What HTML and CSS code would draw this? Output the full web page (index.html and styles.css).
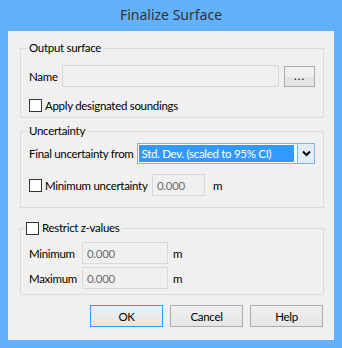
FILE: index.html
```html
<!DOCTYPE html>
<html lang="en">
<head>
    <meta charset="UTF-8">
    <title>Finalize Surface</title>
    <link rel="stylesheet" href="styles.css">
</head>
<body>
    <div class="window">
        <div class="titlebar">Finalize Surface</div>
        <div class="client">
            <div class="group group-output">
                <div class="group-title">Output surface</div>
                <div class="row name-row">
                    <span class="lbl lbl-name">Name</span>
                    <input class="field field-name" type="text" disabled>
                    <button class="btn btn-browse" type="button">...</button>
                </div>
                <label class="row check-row"><input type="checkbox" class="check">Apply designated soundings</label>
            </div>

            <div class="group group-uncert">
                <div class="group-title">Uncertainty</div>
                <div class="row combo-row">
                    <span class="lbl lbl-from">Final uncertainty from</span>
                    <div class="combo">
                        <span class="combo-text">Std. Dev. (scaled to 95% CI)</span>
                        <span class="combo-btn">
                            <svg width="9" height="7" viewBox="0 0 9 7"><path d="M1 1.5 L4.5 5 L8 1.5" fill="none" stroke="#000" stroke-width="2"/></svg>
                        </span>
                    </div>
                </div>
                <div class="row min-row">
                    <label class="check-label"><input type="checkbox" class="check">Minimum uncertainty</label>
                    <input class="field field-small" type="text" value="0.000" disabled>
                    <span class="unit unit-wide">m</span>
                </div>
            </div>

            <div class="group group-z">
                <label class="group-title"><input type="checkbox" class="check">Restrict z-values</label>
                <div class="row z-row z-min">
                    <span class="lbl lbl-z">Minimum</span>
                    <input class="field field-z" type="text" value="0.000" disabled>
                    <span class="unit">m</span>
                </div>
                <div class="row z-row z-max">
                    <span class="lbl lbl-z">Maximum</span>
                    <input class="field field-z" type="text" value="0.000" disabled>
                    <span class="unit">m</span>
                </div>
            </div>

            <div class="buttons">
                <button class="btn btn-dialog btn-default" type="button">OK</button>
                <button class="btn btn-dialog" type="button">Cancel</button>
                <button class="btn btn-dialog" type="button">Help</button>
            </div>
        </div>
    </div>
</body>
</html>
```

FILE: styles.css
```css
body {
    margin: 0;
    font-family: Lato, "Noto Sans", sans-serif;
    font-size: 11.5px;
    letter-spacing: -0.3px;
    color: #000;
}
.window {
    width: 342px;
    height: 348px;
    box-sizing: border-box;
    background-color: #63b1fb;
    padding: 0 8px 8px;
    display: flex;
    flex-direction: column;
}
.titlebar {
    height: 31px;
    line-height: 30px;
    text-align: center;
    font-family: "Noto Sans", sans-serif;
    font-size: 14px;
    letter-spacing: 0;
    color: #333;
}
.client {
    flex: 1;
    background-color: #f0f0f0;
    padding: 17px 10px 0 12px;
    white-space: nowrap;
}
.group {
    border: 1px solid #dcdcdc;
    padding: 0 8px 5px 8px;
}
.group-title {
    display: flex;
    align-items: center;
    width: max-content;
    height: 14px;
    line-height: 14px;
    margin: -8px 0 0 -2px;
    padding: 0 2px;
    background-color: #f0f0f0;
}
.group-uncert {
    margin-top: 13px;
    padding-bottom: 11px;
}
.group-z {
    margin-top: 20px;
}
.group-z .group-title {
    margin-left: -3px;
    padding-left: 0;
}
.row {
    display: flex;
    align-items: center;
}
.name-row {
    margin-top: 10px;
    height: 22px;
}
.check-row {
    margin-top: 11px;
    height: 14px;
}
.check-label {
    display: flex;
    align-items: center;
    width: 123px;
}
.check {
    appearance: none;
    -webkit-appearance: none;
    width: 13px;
    height: 13px;
    margin: 0 3px 0 0;
    border: 1px solid #333;
    background-color: #fff;
    box-sizing: border-box;
    flex-shrink: 0;
}
.lbl-name {
    width: 33px;
}
.lbl-from {
    width: 110px;
}
.lbl-z {
    width: 53px;
}
.field {
    box-sizing: border-box;
    height: 22px;
    border: 1px solid #d9d9d9;
    background-color: #f0f0f0;
    color: #6d6d6d;
    -webkit-text-fill-color: #6d6d6d;
    opacity: 1;
    font: inherit;
    letter-spacing: inherit;
    padding: 0 4px;
    margin: 0;
    outline: none;
}
.field-name {
    width: 220px;
}
.field-small {
    width: 53px;
}
.field-z {
    width: 86px;
}
.unit {
    margin-left: 5px;
}
.unit-wide {
    margin-left: 8px;
}
.btn {
    box-sizing: border-box;
    border: 1px solid #acacac;
    background: linear-gradient(#f0f0f0, #e5e5e5);
    font: inherit;
    letter-spacing: inherit;
    color: #000;
    padding: 0;
    margin: 0;
}
.btn-browse {
    width: 31px;
    height: 21px;
    margin-left: 5px;
    background: linear-gradient(#f0f0f0 50%, #e5e5e5 50%);
    line-height: 14px;
    letter-spacing: 1px;
}
.combo-row {
    margin-top: 5px;
    height: 21px;
}
.combo {
    box-sizing: border-box;
    width: 180px;
    height: 21px;
    border: 1px solid #7eb4ea;
    background-color: #fff;
    display: flex;
}
.combo-text {
    flex: 1;
    margin: 1px 3px 1px 1px;
    background-color: #3399ff;
    color: #fff;
    line-height: 17px;
    padding-left: 2px;
    overflow: hidden;
}
.combo-btn {
    width: 16px;
    margin: -1px -1px -1px 0;
    border: 1px solid #7eb4ea;
    background-color: #e0eefb;
    display: flex;
    align-items: center;
    justify-content: center;
}
.min-row {
    margin-top: 10px;
    height: 22px;
}
.z-min {
    margin-top: 7px;
    height: 22px;
}
.z-max {
    margin-top: 3px;
    height: 22px;
}
.buttons {
    display: flex;
    justify-content: flex-end;
    gap: 7px;
    margin-top: 10px;
    padding-right: 1px;
}
.btn-dialog {
    width: 73px;
    height: 22px;
}
.btn-default {
    border-color: #3399ff;
}
```
